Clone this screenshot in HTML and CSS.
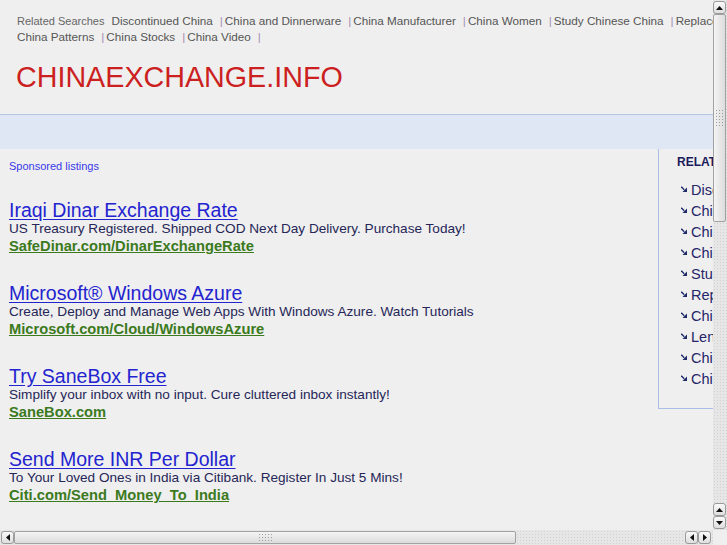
FILE: index.html
```html
<!DOCTYPE html>
<html>
<head>
<meta charset="utf-8">
<link rel="stylesheet" href="styles.css">
</head>
<body>
<div class="viewport">
  <div class="content">
    <div class="page">
      <div class="related">
        <div class="rline"><span class="rlabel">Related Searches</span><a>Discontinued China</a><span class="sep">|</span><a>China and Dinnerware</a><span class="sep">|</span><a>China Manufacturer</a><span class="sep">|</span><a>China Women</a><span class="sep">|</span><a>Study Chinese China</a><span class="sep">|</span><a>Replacement China</a><span class="sep">|</span><a>Lenox China</a><span class="sep">|</span></div>
        <div class="rline"><a class="first">China Patterns</a><span class="sep">|</span><a>China Stocks</a><span class="sep">|</span><a>China Video</a><span class="sep">|</span></div>
      </div>
      <h1 class="title">CHINAEXCHANGE.INFO</h1>
      <div class="band"></div>
      <div class="main">
        <div class="listings">
          <div class="sponsored">Sponsored listings</div>
          <div class="ad">
            <a class="ad-title">Iraqi Dinar Exchange Rate</a>
            <div class="ad-desc">US Treasury Registered. Shipped COD Next Day Delivery. Purchase Today!</div>
            <a class="ad-url">SafeDinar.com/DinarExchangeRate</a>
          </div>
          <div class="ad">
            <a class="ad-title">Microsoft® Windows Azure</a>
            <div class="ad-desc">Create, Deploy and Manage Web Apps With Windows Azure. Watch Tutorials</div>
            <a class="ad-url">Microsoft.com/Cloud/WindowsAzure</a>
          </div>
          <div class="ad">
            <a class="ad-title">Try SaneBox Free</a>
            <div class="ad-desc">Simplify your inbox with no input. Cure cluttered inbox instantly!</div>
            <a class="ad-url">SaneBox.com</a>
          </div>
          <div class="ad">
            <a class="ad-title">Send More INR Per Dollar</a>
            <div class="ad-desc">To Your Loved Ones in India via Citibank. Register In Just 5 Mins!</div>
            <a class="ad-url">Citi.com/Send_Money_To_India</a>
          </div>
        </div>
        <div class="sidebar">
          <div class="side-head">RELATED SEARCHES</div>
          <ul class="side-list">
            <li><svg class="arrow" width="6" height="6" viewBox="0 0 6 6"><path d="M0.3 0.8 L3.2 3.7" stroke="#1d2a6a" stroke-width="1.3"/><path d="M6 1.5 L6 6 L1.5 6 Z" fill="#1d2a6a"/></svg>Discontinued China</li>
            <li><svg class="arrow" width="6" height="6" viewBox="0 0 6 6"><path d="M0.3 0.8 L3.2 3.7" stroke="#1d2a6a" stroke-width="1.3"/><path d="M6 1.5 L6 6 L1.5 6 Z" fill="#1d2a6a"/></svg>China and Dinnerware</li>
            <li><svg class="arrow" width="6" height="6" viewBox="0 0 6 6"><path d="M0.3 0.8 L3.2 3.7" stroke="#1d2a6a" stroke-width="1.3"/><path d="M6 1.5 L6 6 L1.5 6 Z" fill="#1d2a6a"/></svg>China Manufacturer</li>
            <li><svg class="arrow" width="6" height="6" viewBox="0 0 6 6"><path d="M0.3 0.8 L3.2 3.7" stroke="#1d2a6a" stroke-width="1.3"/><path d="M6 1.5 L6 6 L1.5 6 Z" fill="#1d2a6a"/></svg>China Women</li>
            <li><svg class="arrow" width="6" height="6" viewBox="0 0 6 6"><path d="M0.3 0.8 L3.2 3.7" stroke="#1d2a6a" stroke-width="1.3"/><path d="M6 1.5 L6 6 L1.5 6 Z" fill="#1d2a6a"/></svg>Study Chinese China</li>
            <li><svg class="arrow" width="6" height="6" viewBox="0 0 6 6"><path d="M0.3 0.8 L3.2 3.7" stroke="#1d2a6a" stroke-width="1.3"/><path d="M6 1.5 L6 6 L1.5 6 Z" fill="#1d2a6a"/></svg>Replacement China</li>
            <li><svg class="arrow" width="6" height="6" viewBox="0 0 6 6"><path d="M0.3 0.8 L3.2 3.7" stroke="#1d2a6a" stroke-width="1.3"/><path d="M6 1.5 L6 6 L1.5 6 Z" fill="#1d2a6a"/></svg>China Patterns</li>
            <li><svg class="arrow" width="6" height="6" viewBox="0 0 6 6"><path d="M0.3 0.8 L3.2 3.7" stroke="#1d2a6a" stroke-width="1.3"/><path d="M6 1.5 L6 6 L1.5 6 Z" fill="#1d2a6a"/></svg>Lenox China</li>
            <li><svg class="arrow" width="6" height="6" viewBox="0 0 6 6"><path d="M0.3 0.8 L3.2 3.7" stroke="#1d2a6a" stroke-width="1.3"/><path d="M6 1.5 L6 6 L1.5 6 Z" fill="#1d2a6a"/></svg>China Stocks</li>
            <li><svg class="arrow" width="6" height="6" viewBox="0 0 6 6"><path d="M0.3 0.8 L3.2 3.7" stroke="#1d2a6a" stroke-width="1.3"/><path d="M6 1.5 L6 6 L1.5 6 Z" fill="#1d2a6a"/></svg>China Video</li>
          </ul>
        </div>
      </div>
    </div>
  </div>
  <div class="vscroll">
    <div class="sbtn up"><svg width="7" height="4" viewBox="0 0 7 4"><path d="M0 4 L3.5 0 L7 4 Z" fill="#111"/></svg></div>
    <div class="vthumb"><div class="grip vgrip"></div></div>
    <div class="vtrack"></div>
    <div class="sbtn up"><svg width="7" height="4" viewBox="0 0 7 4"><path d="M0 4 L3.5 0 L7 4 Z" fill="#111"/></svg></div>
    <div class="sbtn down"><svg width="7" height="4" viewBox="0 0 7 4"><path d="M0 0 L3.5 4 L7 0 Z" fill="#111"/></svg></div>
  </div>
  <div class="hscroll">
    <div class="sbtn hbtn"><svg width="4" height="7" viewBox="0 0 4 7"><path d="M4 0 L0 3.5 L4 7 Z" fill="#111"/></svg></div>
    <div class="hthumb"><div class="grip hgrip"></div></div>
    <div class="htrack"></div>
    <div class="sbtn hbtn"><svg width="4" height="7" viewBox="0 0 4 7"><path d="M4 0 L0 3.5 L4 7 Z" fill="#111"/></svg></div>
    <div class="sbtn hbtn"><svg width="4" height="7" viewBox="0 0 4 7"><path d="M0 0 L4 3.5 L0 7 Z" fill="#111"/></svg></div>
    <div class="hend"></div>
  </div>
  <div class="corner"></div>
</div>
</body>
</html>
```

FILE: styles.css
```css
html, body {
  margin: 0;
  padding: 0;
  background: #efefef;
}

.viewport {
  width: 727px;
  height: 545px;
  display: grid;
  grid-template-columns: 713px 14px;
  grid-template-rows: 530px 15px;
  overflow: hidden;
  font-family: "Liberation Sans", Arial, sans-serif;
}

.content {
  overflow: hidden;
  background: #efefef;
}

.page {
  width: 900px;
}

.related {
  padding: 13px 0 1px 17px;
  color: #5a5a5a;
  font-size: 11.7px;
  line-height: 16px;
}

.rline {
  white-space: nowrap;
}

.rlabel {
  font-size: 11px;
  color: #666;
  margin-right: 7px;
}

.related a {
  color: #555;
}

.sep {
  color: #a58bb5;
  margin: 0 2px 0 7px;
}

.title {
  margin: 0;
  padding: 12px 0 0 16px;
  height: 49px;
  font-weight: normal;
  font-size: 28.7px;
  line-height: 38px;
  color: #cc1f1f;
  letter-spacing: 0;
}

.band {
  margin-top: 7px;
  height: 34px;
  background: #dfe6f4;
  border-top: 1px solid #b9c7e6;
}

.main {
  display: flex;
  align-items: flex-start;
}

.listings {
  width: 649px;
  padding: 9px 0 0 9px;
}

.sponsored {
  font-size: 11px;
  line-height: 16px;
  color: #3838e8;
  margin-bottom: 26px;
}

.ad {
  height: 83px;
}

.ad-title {
  display: block;
  font-size: 19.5px;
  line-height: 20px;
  color: #2323d0;
  text-decoration: underline;
  text-underline-offset: 2px;
}

.ad-desc {
  font-size: 13.6px;
  line-height: 17px;
  color: #262658;
}

.ad-url {
  display: inline-block;
  font-size: 14.7px;
  line-height: 17px;
  font-weight: bold;
  color: #3b7a1d;
  text-decoration: underline;
}

.sidebar {
  width: 220px;
  height: 260px;
  border-left: 1px solid #a9bde6;
  border-bottom: 1px solid #a9bde6;
  padding: 6px 0 0 18px;
  box-sizing: border-box;
}

.side-head {
  font-size: 12px;
  font-weight: bold;
  color: #1b1b5c;
  line-height: 14px;
  margin-bottom: 11px;
}

.side-list {
  list-style: none;
  margin: 0;
  padding: 0 0 0 4px;
}

.side-list li {
  font-size: 14.5px;
  line-height: 21px;
  color: #252567;
  display: flex;
  align-items: center;
}

.arrow {
  flex: none;
  margin-right: 4px;
  margin-top: -3px;
}

/* Scrollbars */
.vscroll {
  display: flex;
  flex-direction: column;
  background: #e6e6e6;
  background-image: radial-gradient(#d2d2d2 0.6px, transparent 0.8px);
  background-size: 3px 3px;
  padding-top: 1px;
}

.sbtn {
  width: 13px;
  height: 13px;
  box-sizing: border-box;
  border: 1px solid #9a9a9a;
  border-radius: 3px;
  background: linear-gradient(#fafafa, #dedede);
  display: flex;
  align-items: center;
  justify-content: center;
  flex: none;
}

.vthumb {
  height: 208px;
  flex: none;
  width: 13px;
  box-sizing: border-box;
  border: 1px solid #a2a2a2;
  border-radius: 2px;
  background: linear-gradient(90deg, #f4f4f4, #dcdcdc);
  display: flex;
  align-items: center;
  justify-content: center;
}

.grip {
  background-image: radial-gradient(#9c9c9c 0.7px, transparent 0.9px);
  background-size: 3px 3px;
}

.vgrip {
  width: 9px;
  height: 18px;
}

.hgrip {
  width: 15px;
  height: 9px;
}

.vtrack {
  flex: 1;
}

.vscroll .down {
  margin-bottom: 1px;
}

.hscroll {
  display: flex;
  align-items: center;
  background: #e6e6e6;
  background-image: radial-gradient(#d2d2d2 0.6px, transparent 0.8px);
  background-size: 3px 3px;
  padding-left: 1px;
}

.hbtn {
  height: 13px;
  width: 13px;
}

.hthumb {
  width: 502px;
  height: 13px;
  flex: none;
  box-sizing: border-box;
  border: 1px solid #a2a2a2;
  border-radius: 2px;
  background: linear-gradient(#f4f4f4, #dcdcdc);
  display: flex;
  align-items: center;
  justify-content: center;
}

.htrack {
  flex: 1;
}

.hend {
  width: 2px;
}

.corner {
  background: #efefef;
}
```
